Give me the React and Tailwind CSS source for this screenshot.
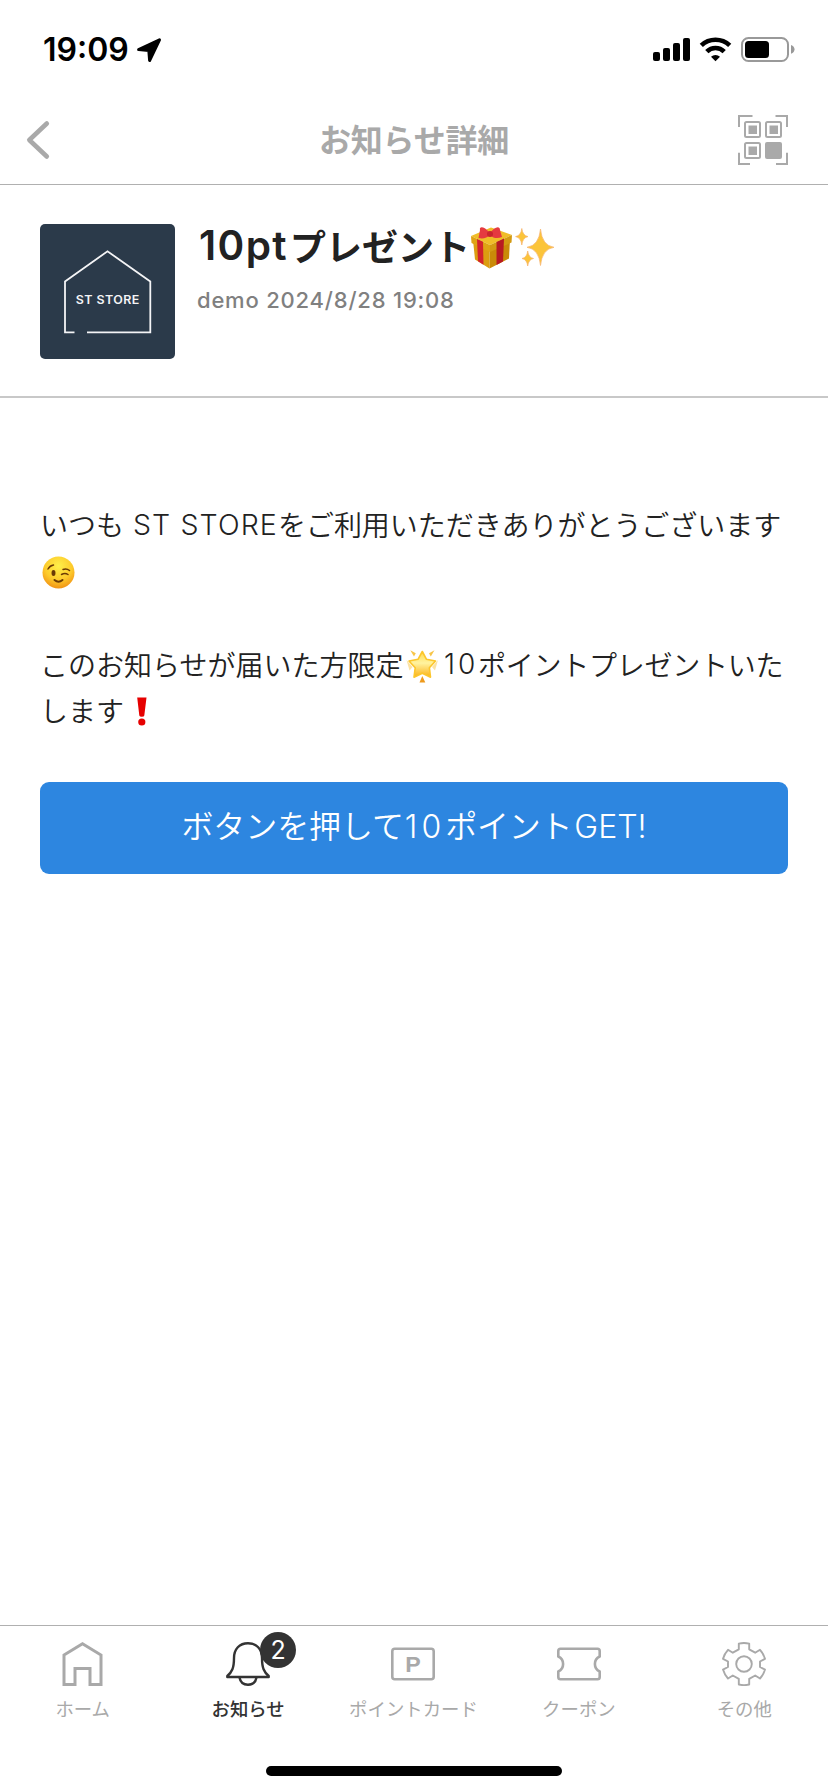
import React from 'react'

const tabs = [
  { id: 'home', label: 'ホーム' },
  { id: 'news', label: 'お知らせ', badge: 2 },
  { id: 'card', label: 'ポイントカード' },
  { id: 'coupon', label: 'クーポン' },
  { id: 'other', label: 'その他' },
]

const StatusBar = () => (
  <div className="h-[92px] flex items-start justify-between pl-[43px] pr-[33px] pt-[30px] text-black">
    <div className="flex items-center h-10">
      <span className="w-[87px] whitespace-nowrap font-['Inter',sans-serif] font-semibold text-[32px] leading-10">19:09</span>
      <svg className="ml-[6px]" width="27" height="27" viewBox="136 37 27 27">
        <path d="M159.5 39.8 L149.6 60.5 L148.8 50.4 L138.6 49.6 Z" fill="black" stroke="black" strokeWidth="3" strokeLinejoin="round" />
      </svg>
    </div>
    <svg className="mt-[5px]" width="143" height="29" viewBox="652 35 143 29">
      <rect x="653" y="52" width="7" height="9" rx="2" />
      <rect x="663" y="48" width="7" height="13" rx="2" />
      <rect x="673" y="43" width="7" height="18" rx="2" />
      <rect x="683" y="38" width="7" height="23" rx="2" />
      <g fill="none" stroke="black" strokeWidth="4.6">
        <path d="M701.3 45.4 A20.5 20.5 0 0 1 729.7 45.4" />
        <path d="M706.8 51.6 A12.3 12.3 0 0 1 724.2 51.6" />
      </g>
      <path d="M711 56.8 A6.6 6.6 0 0 1 720 56.8 L715.5 61.3 Z" />
      <rect x="742" y="38" width="46" height="23" rx="6.5" fill="none" stroke="#999" strokeWidth="2" />
      <rect x="745" y="41" width="24" height="17" rx="3.5" />
      <path d="M791 45 Q794.5 46.5 794.5 49.3 Q794.5 52.5 791 53.7 Z" fill="#999" />
    </svg>
  </div>
)

const Header = () => (
  <header className="h-[93px] flex items-center justify-between border-b border-[#b0b0b0] pl-6 pr-10 pt-[3px] text-[#a9a9a9]">
    <svg width="50" height="50" viewBox="24 115 50 50" fill="none" stroke="currentColor" strokeWidth="4.6" strokeLinecap="round" strokeLinejoin="round">
      <path d="M46.8 123.5 L29.3 140 L46.8 156.5" />
    </svg>
    <h1 className="pl-[16px] -mt-[3px] font-bold text-[32px] leading-none tracking-[-0.2px]">お知らせ詳細</h1>
    <svg width="50" height="50" viewBox="738 115 50 50" fill="none" stroke="currentColor" strokeWidth="2">
      <path d="M752.5 116 H739 V127 M775.5 116 H787 V127 M739 152.7 V164 H750 M776 164 H787 V152.7" />
      <rect x="745" y="122" width="15" height="15" rx="1.5" />
      <rect x="766" y="122" width="15" height="15" rx="1.5" />
      <rect x="745" y="143" width="15" height="15" rx="1.5" />
      <g fill="currentColor" stroke="none">
        <rect x="748.5" y="125.5" width="8.5" height="8.5" />
        <rect x="769.5" y="125.5" width="8.5" height="8.5" />
        <rect x="748.5" y="146.5" width="8.5" height="8.5" />
        <rect x="765" y="142" width="17" height="17" rx="2" />
      </g>
    </svg>
  </header>
)

const StoreLogo = () => (
  <svg className="rounded-[5px] bg-[#2b3a4a] shrink-0" width="135" height="135" viewBox="40 224 135 135">
    <path d="M74.5 332.3 H65 V281.5 L107.5 251.3 L150.3 281.5 V332.3 H87" fill="none" stroke="#f4f4f6" strokeWidth="1.8" />
    <text x="75.8" y="304" textLength="64" lengthAdjust="spacingAndGlyphs" fill="#f4f4f6" fontFamily="Inter, sans-serif" fontWeight="600" fontSize="11.5" letterSpacing="0.4">ST STORE</text>
  </svg>
)

const Gift = () => (
  <svg width="44" height="46" viewBox="469 223 44 46">
    <path d="M473 239 L489.5 247 V267.5 L475 258.5 Z" fill="#dc9d10" />
    <path d="M489.5 247 L510 238 L509 257.5 L489.5 267.5 Z" fill="#c98a08" />
    <path d="M471 235 L491 226.5 L512 234 L490 244 Z" fill="#f0bd28" />
    <path d="M471 235 L490 244 V251 L471.5 242 Z" fill="#dfa314" />
    <path d="M490 244 L512 234 L511.5 241.5 L490 251 Z" fill="#d39a12" />
    <path d="M477 238 L483 240.7 L483.5 263.7 L478 260.3 Z" fill="#d3232c" />
    <path d="M496.5 241 L504 237.5 L503 260.6 L496.5 264 Z" fill="#b81a22" />
    <path d="M490 232 C484 225 479 225 480 229 L478.5 237 C483 238 487 237 490 234 C494 238 498 237.5 502 236 L500 229 C500 224 494 226 490 232 Z" fill="#e53a40" />
    <circle cx="490" cy="233" r="3" fill="#c9252d" />
  </svg>
)

const Sparkles = () => (
  <svg width="40" height="42" viewBox="515 226 40 42">
    <g fill="#fbc43a" stroke="#f6b26b" strokeWidth="0.7">
      <path d="M540.5 229 Q542 245.5 554 247.3 Q542 249 540.5 265.5 Q539 249 527 247.3 Q539 245.5 540.5 229 Z" />
      <path d="M521.8 228.5 Q522.7 235.5 528 236.6 Q522.7 237.6 521.8 245 Q521 237.6 515.6 236.6 Q521 235.5 521.8 228.5 Z" />
      <path d="M527.7 251 Q528.5 257.5 533.5 258.5 Q528.5 259.5 527.7 266 Q527 259.5 522 258.5 Q527 257.5 527.7 251 Z" />
    </g>
  </svg>
)

const Wink = () => (
  <svg className="block" width="33" height="33" viewBox="42 556 33 33">
    <defs>
      <radialGradient id="wink" cx="0.5" cy="0.3" r="0.72">
        <stop offset="0" stopColor="#fff04a" />
        <stop offset="0.6" stopColor="#fdca2b" />
        <stop offset="1" stopColor="#f08f14" />
      </radialGradient>
    </defs>
    <circle cx="58.5" cy="572.5" r="16" fill="url(#wink)" />
    <ellipse cx="53.5" cy="573" rx="2" ry="3" fill="#6b3a05" />
    <g fill="none" stroke="#6b3a05" strokeWidth="1.5" strokeLinecap="round">
      <path d="M48 569 Q50 565.5 53.5 565" />
      <path d="M63 569.5 Q66.5 568 69.5 570.5" />
      <path d="M61.5 574.5 Q65 572.5 68 574.5" />
      <path d="M54.5 580 Q58.5 583.5 62.5 580" strokeWidth="2" />
    </g>
  </svg>
)

const GlowStar = () => (
  <svg className="mt-[5px]" width="34" height="36" viewBox="405 649 34 36">
    <defs>
      <linearGradient id="glow" x1="0" y1="0" x2="0" y2="1">
        <stop offset="0" stopColor="#ffd94a" />
        <stop offset="0.45" stopColor="#fff3a0" />
        <stop offset="1" stopColor="#fbb014" />
      </linearGradient>
    </defs>
    <path d="M422.3 652.5 L426.5 660.3 L435.5 662 L429.4 668.8 L430.5 678.2 L422.3 674.3 L414 678.2 L415.2 668.8 L409 662 L418 660.3 Z" fill="url(#glow)" stroke="#fcc62c" strokeWidth="1.6" strokeLinejoin="round" />
    <g fill="#f7c548">
      <path d="M410.3 651.2 L415.8 654.3 L414 657.5 Z" />
      <path d="M434.5 651.2 L429 654.3 L430.8 657.5 Z" />
      <path d="M422.3 677 L425.3 683.5 L419.5 683.5 Z" fill="#ee9a1c" />
      <path d="M406.5 661 L412.5 668 L409.5 671.5 Z" opacity="0.5" />
      <path d="M438 661 L432 668 L435 671.5 Z" opacity="0.5" />
    </g>
  </svg>
)

const Bang = () => (
  <svg className="mt-1" width="10" height="30" viewBox="137 698 10 30">
    <path d="M137.2 698.5 H146.5 L144.3 716.5 Q144.2 717.8 141.8 717.8 Q139.5 717.8 139.3 716.5 Z" fill="#e60000" />
    <circle cx="141.8" cy="723" r="3.6" fill="#e60000" />
  </svg>
)

const TabIcon = ({ id }) => {
  if (id === 'home') {
    return (
      <svg width="44" height="44" viewBox="60.5 1642 44 44" fill="none" stroke="currentColor" strokeWidth="3">
        <path d="M63.5 1655 L82 1643.8 L100.5 1655 V1684.5 H89.5 V1668.5 H74.5 V1684.5 H63.5 Z" />
      </svg>
    )
  }
  if (id === 'news') {
    return (
      <svg width="44" height="44" viewBox="226 1642 44 44" fill="none" stroke="currentColor" strokeWidth="2.4" strokeLinejoin="round">
        <path d="M248 1643.2 C239.5 1643.2 234 1649 234 1658 C234 1668 232 1672 227.3 1676 V1677 H268.7 V1676 C264 1672 262 1668 262 1658 C262 1649 256.5 1643.2 248 1643.2 Z" />
        <path d="M239.5 1677.5 C240.3 1682 243.5 1684.7 248 1684.7 C252.5 1684.7 255.7 1682 256.5 1677.5" />
      </svg>
    )
  }
  if (id === 'card') {
    return (
      <svg width="44" height="44" viewBox="391 1642 44 44" fill="none" stroke="currentColor" strokeWidth="2.6">
        <rect x="392.3" y="1648.8" width="41.4" height="30.5" rx="2.5" />
        <text x="405.3" y="1671.7" textLength="15.5" lengthAdjust="spacingAndGlyphs" fill="currentColor" stroke="none" fontFamily="Liberation Sans, sans-serif" fontWeight="700" fontSize="22.5">P</text>
      </svg>
    )
  }
  if (id === 'coupon') {
    return (
      <svg width="44" height="44" viewBox="556 1642 44 44" fill="none" stroke="currentColor" strokeWidth="2.6" strokeLinejoin="round">
        <path d="M559.5 1648.8 H596.5 Q598.7 1648.8 598.7 1651 V1656.5 C592.3 1659.5 592.3 1668.5 598.7 1671.5 V1677 Q598.7 1679.3 596.5 1679.3 H559.5 Q557.3 1679.3 557.3 1677 V1671.5 C563.7 1668.5 563.7 1659.5 557.3 1656.5 V1651 Q557.3 1648.8 559.5 1648.8 Z" />
      </svg>
    )
  }
  return (
    <svg width="44" height="44" viewBox="722 1642 44 44" fill="none" stroke="currentColor" strokeWidth="1.9" strokeLinejoin="round">
      <circle cx="744" cy="1664" r="7.8" />
      <path d="M738.8 1643.6 Q744 1642.3 749.2 1643.6 V1649.3 L755.2 1652.7 L760 1649.8 Q763.5 1653.5 765 1658.8 L760 1661.5 V1667 L765 1669.6 Q763.5 1674.8 760 1678.5 L755.2 1675.5 L749.2 1678.8 V1684.5 Q744 1685.8 738.8 1684.5 V1678.8 L732.8 1675.5 L728 1678.5 Q724.5 1674.8 723 1669.6 L728 1667 V1661.5 L723 1658.8 Q724.5 1653.5 728 1649.8 L732.8 1652.7 L738.8 1649.3 Z" />
    </svg>
  )
}

const TabBar = () => (
  <nav className="h-[167px] border-t border-[#b0b0b0] flex flex-col items-center justify-between pt-4 pb-4">
    <div className="w-full grid grid-cols-5 pr-px">
      {tabs.map((tab) => (
        <div
          key={tab.id}
          className={tab.badge ? 'flex flex-col items-center gap-[9px] text-[#333] font-medium' : 'flex flex-col items-center gap-[9px] text-[#a9a9a9]'}
        >
          <div className="relative">
            <TabIcon id={tab.id} />
            {tab.badge && (
              <span className="absolute left-[34px] -top-[10px] size-9 rounded-full bg-[#333] text-white text-center font-['Inter',sans-serif] font-normal text-[25px] leading-9">
                {tab.badge}
              </span>
            )}
          </div>
          <span className="text-[18.4px] leading-[26px] whitespace-nowrap">{tab.label}</span>
        </div>
      ))}
    </div>
    <div className="w-[296px] h-[10px] rounded-full bg-black" />
  </nav>
)

const App = () => {
  return (
    <div className="w-[828px] h-[1792px] flex flex-col bg-white overflow-hidden font-['Noto_Sans_CJK_JP',sans-serif]" lang="ja">
      <StatusBar />
      <Header />

      <section className="h-[213px] flex border-b-2 border-[#c8c8c8] pl-10 pt-[39px]">
        <StoreLogo />
        <div className="pl-[22px]">
          <h2 className="flex items-center h-[46px] pl-[2px] font-bold text-[36px] leading-[46px] text-[#222] whitespace-nowrap">
            <span className="w-[91px] -mt-[2px] font-['Inter',sans-serif] font-semibold text-[40.5px] tracking-[1.4px]">10pt</span>
            <span className="w-[179px] -mt-[5px]">プレゼント</span>
            <Gift />
            <span className="w-[2px]" />
            <Sparkles />
          </h2>
          <p className="mt-[14px] font-['Inter',sans-serif] text-[22px] leading-8 font-medium tracking-[0.8px] text-[#808080] whitespace-nowrap">demo 2024/8/28 19:08</p>
        </div>
      </section>

      <main className="flex-1 px-10 pt-[103px] font-[350] text-[28px] leading-[46.5px] text-[#222] whitespace-nowrap">
        <p className="flex h-[46.5px]">
          <span className="w-[93px]">いつも</span>
          <span className="w-[145px] pt-px font-['Inter',sans-serif] font-light text-[28.5px] tracking-[1.1px]">ST STORE</span>
          <span className="tracking-[-0.05px]">をご利用いただきありがとうございます</span>
        </p>
        <p className="flex items-center h-[46.5px] pl-[2px] pt-1"><Wink /></p>
        <p className="h-[46.5px]" />
        <p className="flex items-center h-[46.5px]">
          <span className="w-[365px]">このお知らせが届いた方限定</span>
          <GlowStar />
          <span className="w-[39px] pl-[5px] pt-px font-['Inter',sans-serif] font-light tracking-[3px]">10</span>
          <span className="tracking-[-0.25px]">ポイントプレゼントいた</span>
        </p>
        <p className="flex items-center h-[46.5px]">
          <span className="w-[97px]">します</span>
          <Bang />
        </p>
        <button className="mt-[48px] w-full h-[92px] flex items-baseline justify-center rounded-[9px] pt-[19px] bg-[#2d86e0] text-white text-[32px] leading-[46px]">
          <span className="tracking-[-0.1px]">ボタンを押して</span>
          <span className="pl-px font-['Inter',sans-serif] font-light tracking-[4px]">10</span>
          <span className="tracking-[-0.2px]">ポイント</span>
          <span className="pl-[2px] font-['Inter',sans-serif] font-light">GET!</span>
        </button>
      </main>

      <TabBar />
    </div>
  )
}

export default App
